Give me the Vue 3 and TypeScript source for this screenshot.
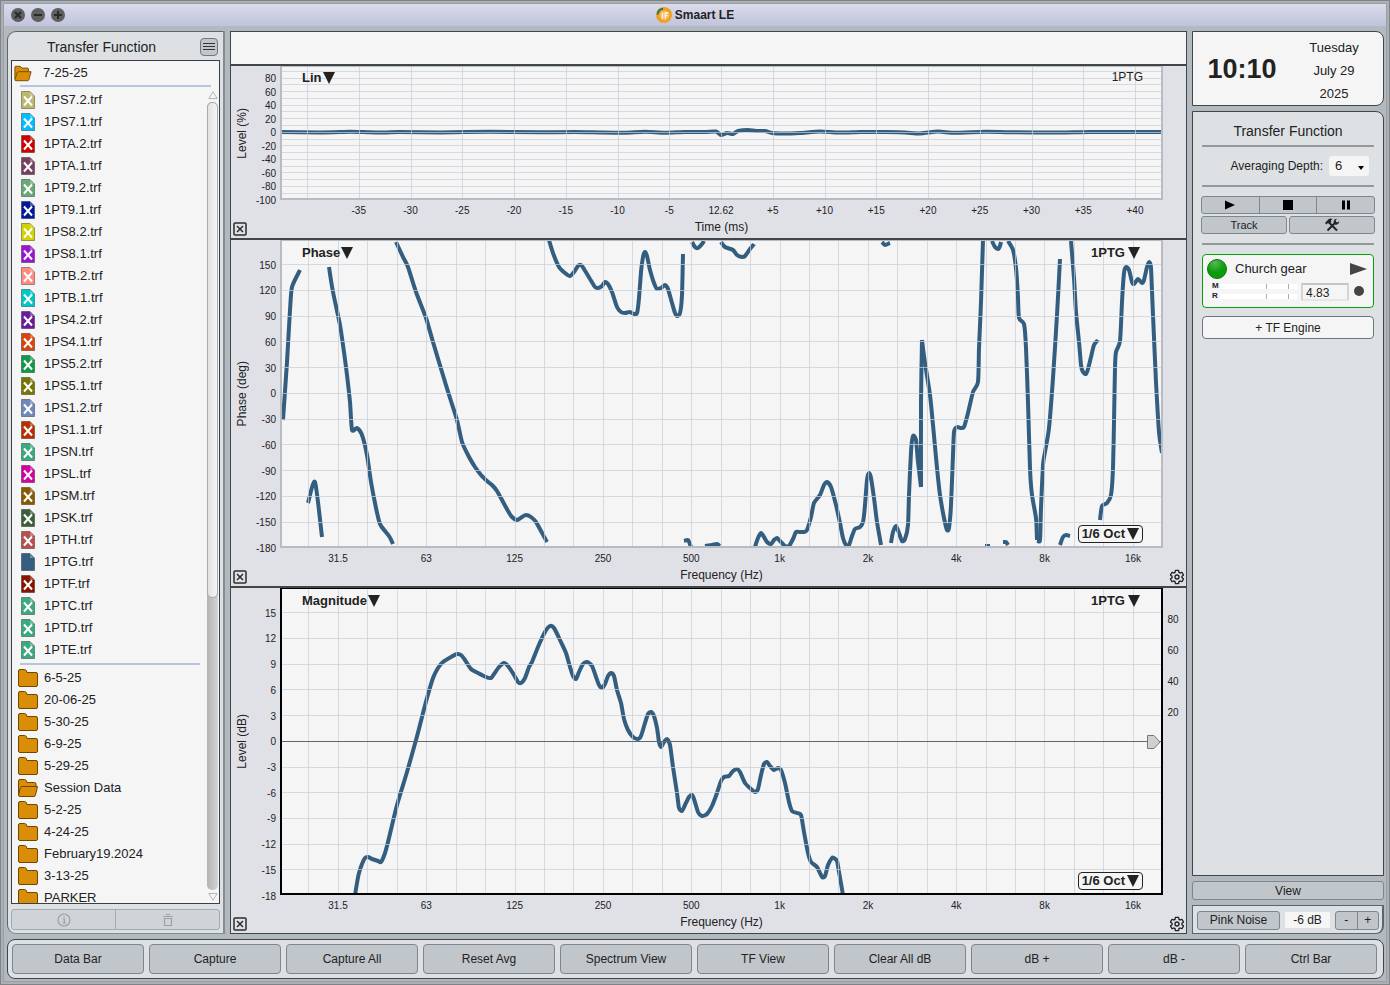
<script setup lang="ts">
import { ref } from 'vue'

interface FileItem { name: string; color: string; hidden: boolean }
interface FolderItem { name: string; open?: boolean }
interface Mark { at: number; text: string }
interface Chart {
  id: string
  title: string
  trace: string
  traceMenu: boolean
  smoothing: boolean
  top: number
  height: number
  xTitle: string
  yTitle: string
  xGrid: number[]
  yGrid: number[]
  xMarks: Mark[]
  yMarks: Mark[]
  rightMarks: Mark[]
  zero: number | null
  curves: number[][]
}

const PLOT_LEFT = 280
const PLOT_WIDTH = 883

const f = (name: string, color: string, hidden = true): FileItem => ({ name: name + '.trf', color, hidden })
const files: FileItem[] = [
  f('1PS7.2', '#bdb76b'), f('1PS7.1', '#00bfff'), f('1PTA.2', '#cc0000'), f('1PTA.1', '#784060'),
  f('1PT9.2', '#66aa77'), f('1PT9.1', '#001a99'), f('1PS8.2', '#d2d200'), f('1PS8.1', '#9a14d2'),
  f('1PTB.2', '#ff8a80'), f('1PTB.1', '#00c8c8'), f('1PS4.2', '#6a1a9a'), f('1PS4.1', '#d9440a'),
  f('1PS5.2', '#0f9a4a'), f('1PS5.1', '#777700'), f('1PS1.2', '#7088bb'), f('1PS1.1', '#b83000'),
  f('1PSN', '#3aaa80'), f('1PSL', '#d400a0'), f('1PSM', '#8a5a00'), f('1PSK', '#3a5f3a'),
  f('1PTH', '#b85050'), f('1PTG', '#335e80', false), f('1PTF', '#8a1200'), f('1PTC', '#3aaa80'),
  f('1PTD', '#3aaa80'), f('1PTE', '#3aaa80'),
]
const folders: FolderItem[] = [
  { name: '6-5-25' }, { name: '20-06-25' }, { name: '5-30-25' }, { name: '6-9-25' }, { name: '5-29-25' },
  { name: 'Session Data', open: true }, { name: '5-2-25' }, { name: '4-24-25' },
  { name: 'February19.2024' }, { name: '3-13-25' }, { name: 'PARKER' },
]
const commands = ['Data Bar', 'Capture', 'Capture All', 'Reset Avg', 'Spectrum View', 'TF View', 'Clear All dB', 'dB +', 'dB -', 'Ctrl Bar']

const range = (from: number, to: number, step = 1): number[] => {
  const out: number[] = []
  for (let v = from; v <= to; v += step) out.push(v)
  return out
}

const freqGrid = range(-16, 12).map(k => 780 + k * 29.44)
const freqMarks: Mark[] = ['31.5', '63', '125', '250', '500', '1k', '2k', '4k', '8k', '16k']
  .map((text, i) => ({ text, at: 338 + i * 88.33 }))

const levelY = (v: number): number => 132.3 - v * 0.677
const phaseY = (v: number): number => 393.4 - v * 0.8587
const magY = (v: number): number => 741.3 - v * 8.57

const impulse: number[] = [280, 132, 320, 132.4, 340, 132, 350, 131.7, 370, 132.3, 385, 132.6, 400, 132, 440, 132.4, 490, 131.8, 540, 132.3, 575, 132, 600, 132.5, 625, 132.8, 645, 131.8, 665, 132.8, 685, 132, 705, 132, 716, 131.5, 721, 135, 727, 133, 733, 134, 738, 131, 748, 130, 756, 131, 765, 131, 772, 133, 785, 133.5, 800, 133, 820, 131.5, 838, 132.6, 860, 132, 880, 132, 905, 132.5, 920, 133.4, 938, 131.6, 955, 132.8, 985, 131.8, 1010, 132.2, 1060, 132.6, 1090, 132, 1163, 132]

const phaseCurves: number[][] = [
  [283, 420, 287, 362, 290, 310, 292, 287, 300, 270],
  [308, 503, 315, 482, 322, 537],
  [329, 267, 333, 292, 340, 325, 344, 352, 347, 375, 350, 402, 352, 430, 357, 428, 362, 435, 367, 455, 371, 482, 376, 508, 380, 524, 385, 531, 389, 536, 393, 544],
  [396, 242, 403, 257, 408, 267, 416, 292, 426, 318, 433, 342, 442, 372, 450, 398, 457, 420, 462, 442, 468, 455, 475, 467, 481, 475, 487, 481, 492, 485, 497, 491, 502, 500, 508, 511, 512, 517, 517, 520, 522, 517, 526, 515, 531, 517, 536, 522, 541, 531, 547, 542],
  [549, 240, 553, 253, 559, 267, 565, 273, 570, 276, 574, 272, 578, 266, 581, 265, 584, 269, 590, 279, 595, 287, 598, 288, 602, 286, 605, 282, 608, 284, 612, 292, 617, 307, 621, 312, 625, 313, 630, 312, 634, 314, 637, 313, 639, 298, 641, 272, 643, 257, 645, 252, 647, 256, 650, 270, 654, 283, 657, 289, 661, 288, 665, 285, 668, 289, 672, 303, 675, 313, 677, 316, 680, 313, 682, 295, 683, 254],
  [692, 242, 695, 247, 698, 248, 702, 244, 704, 241],
  [721, 242, 725, 247, 733, 250, 737, 255, 742, 257, 745, 256, 750, 249, 754, 244],
  [684, 541, 688, 540, 691, 547],
  [705, 546, 712, 545, 717, 544, 720, 546],
  [755, 547, 758, 538, 761, 533, 764, 537, 767, 542, 771, 544, 774, 540, 777, 538, 781, 542, 785, 546, 789, 546, 793, 539, 796, 532, 800, 532, 804, 532, 807, 530, 811, 517, 814, 503, 820, 495, 824, 485, 827, 482, 831, 487, 836, 505, 840, 523, 843, 538, 846, 545, 849, 545, 852, 536, 855, 529, 860, 527, 863, 522, 865, 505, 867, 480, 869, 473, 871, 478, 874, 498, 877, 522, 881, 545],
  [882, 242, 885, 245, 890, 243],
  [891, 543, 893, 532, 896, 526, 899, 533, 902, 541, 905, 539, 908, 525, 909, 495, 911, 452, 913, 436, 916, 440, 918, 462, 921, 487],
  [921, 487, 921, 402, 922, 340],
  [922, 340, 925, 363, 930, 395, 933, 425, 937, 468, 940, 495, 944, 518, 947, 530, 949, 528, 951, 505, 953, 455, 954, 432, 957, 427, 961, 428, 964, 427, 968, 413, 973, 392, 978, 382, 979, 348, 981, 302, 983, 240],
  [992, 241, 995, 247, 998, 249, 1000, 246, 1001, 242],
  [1008, 241, 1013, 250, 1016, 268, 1018, 298, 1019, 318, 1024, 324, 1026, 348, 1028, 402, 1030, 468, 1032, 495, 1036, 518, 1037, 540],
  [1037, 540, 1040, 540, 1041, 508, 1043, 465, 1045, 452, 1049, 428, 1053, 378, 1057, 315, 1060, 259],
  [1071, 241, 1074, 278, 1076, 312, 1079, 342, 1081, 365, 1083, 372, 1086, 374, 1088, 369, 1091, 357, 1094, 345, 1098, 340],
  [1100, 520, 1102, 506, 1107, 503, 1111, 495, 1113, 468, 1114, 422, 1115, 368, 1116, 352, 1120, 341, 1122, 302, 1124, 273, 1126, 267, 1129, 270, 1132, 282, 1134, 284, 1138, 279, 1142, 283, 1144, 280, 1147, 267, 1149, 262, 1151, 268, 1153, 315, 1156, 382, 1159, 432, 1162, 453],
  [985, 546, 990, 546],
  [1003, 542, 1006, 542, 1008, 545],
  [1060, 545, 1063, 537, 1066, 535, 1070, 536],
]

const magnitude: number[] = [355, 895, 357, 883, 359, 873, 362, 864, 365, 858, 368, 857, 372, 859, 378, 861, 381, 862, 385, 853, 389, 838, 397, 805, 407, 772, 416, 740, 422, 717, 427, 698, 433, 678, 438, 668, 443, 662, 451, 657, 457, 654, 461, 655, 465, 660, 471, 669, 478, 673, 486, 677, 491, 678, 494, 674, 499, 667, 504, 663, 508, 666, 514, 675, 518, 682, 521, 683, 525, 678, 529, 667, 532, 662, 538, 647, 545, 632, 550, 626, 554, 628, 560, 640, 566, 653, 570, 667, 573, 676, 576, 679, 579, 672, 583, 664, 587, 662, 592, 666, 596, 677, 599, 685, 602, 688, 605, 684, 608, 676, 611, 673, 614, 676, 617, 690, 621, 703, 624, 719, 628, 730, 633, 737, 638, 739, 641, 736, 645, 723, 648, 714, 651, 712, 654, 716, 657, 728, 659, 742, 661, 747, 664, 742, 667, 739, 670, 745, 673, 767, 677, 793, 679, 808, 682, 811, 685, 805, 689, 797, 692, 795, 694, 799, 698, 812, 702, 816, 707, 814, 712, 806, 717, 793, 721, 781, 724, 777, 729, 776, 733, 771, 737, 769, 740, 772, 745, 783, 751, 789, 755, 792, 758, 789, 761, 775, 764, 764, 767, 762, 770, 766, 774, 770, 778, 768, 781, 770, 785, 783, 789, 802, 792, 811, 797, 813, 801, 815, 804, 832, 808, 853, 811, 862, 817, 867, 822, 877, 825, 876, 828, 865, 832, 858, 834, 858, 837, 861, 839, 872, 843, 895]

const charts: Chart[] = [
  {
    id: 'impulse', title: 'Lin', trace: '1PTG', traceMenu: false, smoothing: false, top: 66, height: 134,
    xTitle: 'Time (ms)', yTitle: 'Level (%)',
    xGrid: range(-8, 8).map(k => 721.5 + k * 51.75),
    yGrid: range(-90, 90, 10).map(levelY),
    xMarks: range(-7, 8).map(k => ({ at: 721 + k * 51.75, text: k === 0 ? '12.62' : (k > 0 ? '+' : '') + k * 5 })),
    yMarks: range(-100, 80, 20).map(v => ({ at: levelY(v), text: String(v) })),
    rightMarks: [], zero: null, curves: [impulse],
  },
  {
    id: 'phase', title: 'Phase', trace: '1PTG', traceMenu: true, smoothing: true, top: 240, height: 308,
    xTitle: 'Frequency (Hz)', yTitle: 'Phase (deg)',
    xGrid: freqGrid, yGrid: range(-150, 150, 30).map(phaseY), xMarks: freqMarks,
    yMarks: range(-180, 150, 30).map(v => ({ at: phaseY(v), text: String(v) })),
    rightMarks: [], zero: null, curves: phaseCurves,
  },
  {
    id: 'magnitude', title: 'Magnitude', trace: '1PTG', traceMenu: true, smoothing: true, top: 588, height: 307,
    xTitle: 'Frequency (Hz)', yTitle: 'Level (dB)',
    xGrid: freqGrid, yGrid: range(-15, 15, 3).filter(v => v !== 0).map(magY), xMarks: freqMarks,
    yMarks: range(-18, 15, 3).map(v => ({ at: magY(v), text: String(v) })),
    rightMarks: [80, 60, 40, 20].map((v, i) => ({ at: 619 + i * 31, text: String(v) })),
    zero: magY(0), curves: [magnitude],
  },
]

const px = (x: number): string => ((x - PLOT_LEFT) / PLOT_WIDTH) * 100 + '%'
const py = (c: Chart, y: number): string => ((y - c.top) / c.height) * 100 + '%'

/* Catmull-Rom spline through flat x,y pairs, written as cubic segments */
function spline(p: number[]): string {
  const n = p.length / 2
  const X = (i: number): number => p[2 * Math.min(Math.max(i, 0), n - 1)]
  const Y = (i: number): number => p[2 * Math.min(Math.max(i, 0), n - 1) + 1]
  let d = `M${X(0)} ${Y(0)}`
  for (let i = 0; i < n - 1; i++) {
    const c = [
      X(i) + (X(i + 1) - X(i - 1)) / 9, Y(i) + (Y(i + 1) - Y(i - 1)) / 9,
      X(i + 1) - (X(i + 2) - X(i)) / 9, Y(i + 1) - (Y(i + 2) - Y(i)) / 9,
    ].map(v => v.toFixed(1))
    d += ` C${c.join(' ')} ${X(i + 1)} ${Y(i + 1)}`
  }
  return d
}

const depth = ref('6')
const delay = ref('4.83')
</script>

<template>
  <div class="window">
    <div class="frame">
      <header class="titlebar">
        <div class="lights">
          <button type="button" aria-label="Close"><svg viewBox="0 0 14 14"><circle cx="7" cy="7" r="7" /><path d="M4 4l6 6M10 4l-6 6" /></svg></button>
          <button type="button" aria-label="Minimize"><svg viewBox="0 0 14 14"><circle cx="7" cy="7" r="7" /><path d="M3 7h8" /></svg></button>
          <button type="button" aria-label="Zoom"><svg viewBox="0 0 14 14"><circle cx="7" cy="7" r="7" /><path d="M3 7h8M7 3v8" /></svg></button>
        </div>
        <h1>
          <svg class="logo" viewBox="0 0 16 16" aria-hidden="true">
            <circle cx="8" cy="8" r="8" fill="#f0a020" />
            <circle cx="8.500" cy="8.500" r="5" fill="#f4b85c" />
            <path d="M1.600 7.500A6.400 6.400 0 0 1 7 1.700" fill="none" stroke="#25796b" stroke-width="2" />
            <path d="M6.500 5.500v6M9.300 11.500V6h3M9.300 8.600h2.400" fill="none" stroke="#fff8e8" stroke-width="1.400" />
          </svg>
          Smaart LE
        </h1>
      </header>

      <main class="workspace">
        <aside class="data">
          <div class="data-head">
            <h2>Transfer Function</h2>
            <button type="button" class="menu" aria-label="Menu"><svg viewBox="0 0 12 10"><path d="M0 1.500h12M0 4.500h12M0 7.500h12" /></svg></button>
          </div>
          <div class="tree">
            <div class="session">
              <svg class="folder-open" viewBox="0 0 20 18"><path d="M1 15V2q0-1 1-1h5l2 2h6q1 0 1 1v3" /><path d="M1 16L3.500 8q.4-1 1.500-1h14l-2.500 9q-.3 1-1.500 1H2q-1 0-1-1z" /></svg>
              <span>7-25-25</span>
            </div>
            <div class="rule"></div>
            <div class="tree-body">
              <div class="rows">
                <ul class="files">
                  <li v-for="item in files" :key="item.name">
                    <svg class="doc" viewBox="0 0 14 18">
                      <path d="M.5.5h8.500l4.500 4.500v12.500H.5z" :fill="item.color" stroke="#000" stroke-opacity=".35" />
                      <path d="M9 1v4h4z" fill="#fff" fill-opacity=".3" />
                      <path v-if="item.hidden" d="M3 5.500l8 9M11 5.500l-8 9" fill="none" stroke="#fff" stroke-width="2" />
                    </svg>
                    <span>{{ item.name }}</span>
                  </li>
                </ul>
                <ul class="folders">
                  <li v-for="item in folders" :key="item.name">
                    <svg v-if="item.open" class="folder-open" viewBox="0 0 20 18"><path d="M.5 16V2q0-1.500 1.500-1.500h4.500q1.500 0 2 1.500l.5 1.500h7.500q1.500 0 1.500 1.500v3" /><path d="M.5 16L2.500 8.500q.4-1 1.500-1h15.500l-2 8.500q-.3 1.500-1.500 1.500H2q-1.500 0-1.500-1.500z" /></svg>
                    <svg v-else class="folder-closed" viewBox="0 0 20 18"><path d="M.5 2q0-1.500 1.500-1.500h4.500q1.500 0 2 1.500l.5 1.500h9q1.500 0 1.500 1.500v11q0 1.500-1.500 1.500H2q-1.500 0-1.500-1.500z" /></svg>
                    <span>{{ item.name }}</span>
                  </li>
                </ul>
              </div>
              <div class="scroll" aria-hidden="true">
                <svg viewBox="0 0 10 8"><path d="M5 .8L9.200 7.500H.8z" /></svg>
                <div class="track"><div class="thumb"></div></div>
                <svg viewBox="0 0 10 8"><path d="M5 7.200L9.200.5H.8z" /></svg>
              </div>
            </div>
          </div>
          <div class="data-actions">
            <button type="button" disabled aria-label="Info"><svg viewBox="0 0 14 14"><circle cx="7" cy="7" r="6" /><path d="M6 6h1.300v4M5.500 10h3.500M6.500 3.800h1.200" /></svg></button>
            <button type="button" disabled aria-label="Delete"><svg viewBox="0 0 14 14"><path d="M2.500 3.500h9M5 1.500h4M3.500 5.500v7h7v-7z" /></svg></button>
          </div>
        </aside>

        <section class="plots">
          <div class="legend"></div>
          <article v-for="c in charts" :key="c.id" class="chart" :class="c.id">
            <div class="y-axis">
              <span class="y-title">{{ c.yTitle }}</span>
              <svg class="y-marks">
                <text v-for="m in c.yMarks" :key="m.text" x="100%" :y="py(c, m.at)" dy="4">{{ m.text }}</text>
              </svg>
            </div>
            <div class="plot">
              <svg class="canvas" width="100%" height="100%">
                <svg width="100%" height="100%" :viewBox="`${PLOT_LEFT} ${c.top} ${PLOT_WIDTH} ${c.height}`" preserveAspectRatio="none">
                  <path v-for="(curve, i) in c.curves" :key="i" class="curve" :d="spline(curve)" />
                </svg>
                <g class="grid">
                  <line v-for="x in c.xGrid" :key="'x' + x" :x1="px(x)" :x2="px(x)" y1="0" y2="100%" />
                  <line v-for="y in c.yGrid" :key="'y' + y" x1="0" x2="100%" :y1="py(c, y)" :y2="py(c, y)" />
                </g>
                <line v-if="c.zero !== null" class="zero" x1="0" x2="100%" :y1="py(c, c.zero)" :y2="py(c, c.zero)" />
              </svg>
              <button type="button" class="pick plot-title">{{ c.title }}<svg viewBox="0 0 12 12"><path d="M0 0h12L6 12z" /></svg></button>
              <button v-if="c.traceMenu" type="button" class="pick trace">{{ c.trace }}<svg viewBox="0 0 12 12"><path d="M0 0h12L6 12z" /></svg></button>
              <span v-else class="trace-name">{{ c.trace }}</span>
              <button v-if="c.smoothing" type="button" class="pick smoothing">1/6 Oct<svg viewBox="0 0 12 12"><path d="M0 0h12L6 12z" /></svg></button>
              <svg v-if="c.zero !== null" class="marker" viewBox="0 0 14 14"><path d="M.5.5h6.500l6 6.500-6 6.500H.5z" /></svg>
            </div>
            <svg class="right-marks">
              <text v-for="m in c.rightMarks" :key="m.text" x="10" :y="py(c, m.at)" dy="4">{{ m.text }}</text>
            </svg>
            <div class="corner left">
              <button type="button" aria-label="Close plot"><svg class="close" viewBox="0 0 14 14"><rect x="1" y="1" width="12" height="12" rx="1" /><path d="M4 4l6 6M10 4l-6 6" /></svg></button>
            </div>
            <div class="x-axis">
              <svg class="x-marks"><text v-for="m in c.xMarks" :key="m.text" :x="px(m.at)" y="14">{{ m.text }}</text></svg>
              <span>{{ c.xTitle }}</span>
            </div>
            <div class="corner right">
              <button v-if="c.smoothing" type="button" aria-label="Plot settings">
                <svg class="gear" viewBox="0 0 24 24"><path d="M19.430 12.980c.04-.32.07-.64.07-.98 0-.34-.03-.66-.07-.98l2.110-1.650c.19-.15.24-.42.12-.64l-2-3.460c-.09-.16-.26-.25-.44-.25-.06 0-.12.01-.17.03l-2.490 1c-.52-.4-1.080-.73-1.690-.98l-.38-2.650C14.460 2.180 14.250 2 14 2h-4c-.25 0-.46.18-.49.42l-.38 2.650c-.61.25-1.170.59-1.690.98l-2.490-1c-.06-.02-.12-.03-.18-.03-.17 0-.34.09-.43.25l-2 3.460c-.13.22-.07.49.12.64l2.110 1.650c-.04.32-.07.65-.07.98 0 .33.03.66.07.98l-2.110 1.650c-.19.15-.24.42-.12.64l2 3.460c.09.16.26.25.44.25.06 0 .12-.01.17-.03l2.490-1c.52.4 1.080.73 1.690.98l.38 2.650c.03.24.24.42.49.42h4c.25 0 .46-.18.49-.42l.38-2.650c.61-.25 1.170-.59 1.690-.98l2.490 1c.06.02.12.03.18.03.17 0 .34-.09.43-.25l2-3.460c.12-.22.07-.49-.12-.64z" /><circle cx="12" cy="12" r="3" /></svg>
              </button>
            </div>
          </article>
        </section>

        <aside class="control">
          <div class="clock">
            <time class="time">10:10</time>
            <div class="date"><span>Tuesday</span><span>July 29</span><span>2025</span></div>
          </div>
          <div class="engine">
            <h2>Transfer Function</h2>
            <hr />
            <div class="averaging">
              <label for="depth">Averaging Depth:</label>
              <div class="select">
                <select id="depth" v-model="depth"><option>6</option><option>8</option><option>10</option></select>
                <svg viewBox="0 0 6 4"><path d="M0 0h6L3 4z" /></svg>
              </div>
            </div>
            <hr />
            <div class="transport">
              <button type="button" aria-label="Play"><svg viewBox="0 0 12 12"><path d="M1 1.500l10 4.500-10 4.500z" /></svg></button>
              <button type="button" aria-label="Stop"><svg viewBox="0 0 12 12"><path d="M1 1h10v10H1z" /></svg></button>
              <button type="button" aria-label="Pause"><svg viewBox="0 0 12 12"><path d="M2 1.500h3v9H2zM7 1.500h3v9H7z" /></svg></button>
            </div>
            <div class="tools">
              <button type="button">Track</button>
              <button type="button" aria-label="Tools">
                <svg class="tool-icon" viewBox="0 0 16 14">
                  <path d="M4.500 4L13 12.500M11 5L3.500 12.500" fill="none" stroke="#222" stroke-width="1.900" />
                  <path d="M1 5L4.500 1.200q2-1.200 4.200-.2L6.900 2.300l.5 1.400-2 2-1.300-.9L2.500 6.500z" />
                  <path d="M9.700 5.500q-.5-2.800 1-4 1.200-.9 2.200-.6L11.600 2.500l.5 1.500 1.500.4 1.500-1.400q.4 1.600-.9 2.800-1.400 1.200-3 .8z" />
                </svg>
              </button>
            </div>
            <hr />
            <div class="card">
              <svg class="led" viewBox="0 0 20 20"><defs><radialGradient id="led" cx=".4" cy=".2" r=".5"><stop offset="0" stop-color="#58b858" /><stop offset="1" stop-color="#0b9b0b" /></radialGradient></defs><circle cx="10" cy="10" r="9.500" fill="url(#led)" stroke="#0a7a0a" /></svg>
              <span class="name">Church gear</span>
              <button type="button" aria-label="Start"><svg class="start" viewBox="0 0 17 12"><path d="M0 0l17 6-17 6z" /></svg></button>
              <div class="meters">
                <span>M</span><i></i>
                <span>R</span><i></i>
              </div>
              <input v-model="delay" type="text" aria-label="Delay (ms)" />
              <button type="button" aria-label="Find delay"><svg class="dot" viewBox="0 0 10 10"><circle cx="5" cy="5" r="5" /></svg></button>
            </div>
            <button type="button" class="add">+ TF Engine</button>
          </div>
          <button type="button" class="view">View</button>
          <div class="generator">
            <button type="button" class="noise">Pink Noise</button>
            <output>-6 dB</output>
            <div class="stepper"><button type="button">-</button><button type="button">+</button></div>
          </div>
        </aside>
      </main>

      <nav class="commands">
        <button v-for="c in commands" :key="c" type="button">{{ c }}</button>
      </nav>
    </div>
  </div>
</template>

<style>
html, body { margin: 0; height: 100%; }
#app { height: 100%; }
</style>

<style scoped>
* { box-sizing: border-box; }
.window {
  height: 100%;
  min-height: 600px;
  padding: 2px;
  border: 1px solid #808487;
  background: #a9b1b6;
  color: #222;
  font: 12px/16px "Liberation Sans", Arial, sans-serif;
}
.frame {
  height: 100%;
  display: flex;
  flex-direction: column;
  border: 1px solid #999fa4;
  background: #b2bac0;
}
button { font: inherit; color: inherit; margin: 0; padding: 0; border: 0; background: none; display: flex; align-items: center; justify-content: center; }
button svg { display: block; }
h1, h2 { margin: 0; font-weight: 400; }
h2 { font-size: 14px; line-height: 20px; text-align: center; }
ul { list-style: none; margin: 0; padding: 0; }

.titlebar { flex: none; height: 22px; display: grid; grid-template-columns: 1fr auto 1fr; align-items: center; background: linear-gradient(#dadceb, #c0c3db); }
.lights { display: flex; gap: 6px; padding-left: 7px; }
.lights svg { width: 14px; height: 14px; }
.lights circle { fill: #5e5f60; }
.lights path { stroke: #2a2a2a; stroke-width: 2; fill: none; }
h1 { display: flex; align-items: center; gap: 3px; font-size: 12px; font-weight: 700; }
.logo { width: 16px; height: 16px; }

.workspace { flex: 1; min-height: 0; display: grid; grid-template-columns: 218px minmax(0, 1fr) 192px; column-gap: 5px; padding: 5px 2px 5px 3px; }

.data { display: flex; flex-direction: column; min-height: 0; padding: 0 3px 3px 3px; background: #dde1e4; border: 1px solid #5d666c; border-right: 2px solid #828c92; border-bottom-color: #828c92; border-radius: 9px 0 0 9px; }
.data-head { height: 28px; flex: none; display: grid; grid-template-columns: 1fr 18px; align-items: center; padding: 2px 2px 0 0; }
.data-head h2 { padding-right: 8px; }
.menu { width: 18px; height: 18px; border: 1px solid #6f797f; border-radius: 4px; background: #c0c6ca; }
.menu svg { width: 12px; height: 10px; }
.menu path { stroke: #333; stroke-width: 1; }
.tree { flex: 1; min-height: 0; display: flex; flex-direction: column; border: 1px solid #3a4045; background: #f5f5f5; font-size: 13px; line-height: 22px; }
.session { flex: none; display: flex; align-items: center; gap: 11px; height: 24px; padding: 0 8px 0 2px; }
.session svg { width: 18px; height: 17px; }
.rule { flex: none; height: 2px; margin: 0 8px; background: #b6c5dc; }
.tree-body { flex: 1; min-height: 0; display: grid; grid-template-columns: minmax(0, 1fr) 12px; }
.rows { overflow: hidden; }
.files { margin: 0 7px 0 8px; border-bottom: 2px solid #b6c5dc; padding: 2px 0 2px 1px; }
.files li, .folders li { display: flex; align-items: center; height: 22px; white-space: nowrap; }
.files li { gap: 9px; }
.doc { width: 14px; height: 18px; }
.folders { padding: 2px 0 0 6px; }
.folders li { gap: 6px; }
.folders svg { width: 20px; height: 18px; }
.folder-open path, .folder-closed path { fill: #da8d06; stroke: #6d4703; }
.scroll { display: flex; flex-direction: column; align-items: center; gap: 3px; padding: 4px 1px 2px 0; }
.scroll svg { width: 10px; height: 8px; flex: none; }
.scroll path { fill: none; stroke: #b4b4b4; }
.track { flex: 1; width: 11px; border-radius: 5px; background: linear-gradient(90deg, #b4b4b4, #d4d4d4); }
.thumb { height: 63%; border: 1px solid #aaa; border-radius: 5px; background: linear-gradient(90deg, #e2e2e2, #f5f5f5); }
.data-actions { flex: none; display: flex; height: 21px; margin-top: 5px; border: 1px solid #a3aaae; border-radius: 3px; background: #ced4d7; }
.data-actions button { flex: 1; }
.data-actions button + button { border-left: 1px solid #a3aaae; }
.data-actions svg { width: 14px; height: 14px; }
.data-actions path, .data-actions circle { fill: none; stroke: #9ba1a4; stroke-width: 1.2; }

.plots { display: flex; flex-direction: column; min-height: 0; border: 1px solid #3f474b; background: #e0e1e7; }
.legend { flex: none; height: 32px; background: #f5f5f5; }
.chart { display: grid; grid-template-columns: 49px minmax(0, 1fr) 23px; grid-template-rows: minmax(0, 1fr) 38px; min-height: 0; border-top: 2px solid #3f474b; box-sizing: content-box; }
.impulse { flex: 172 1 0; }
.phase { flex: 346 1 0; }
.magnitude { flex: 345 1 0; }
.y-axis { display: flex; align-items: center; padding: 0 4px 0 3px; }
.y-title { width: 16px; writing-mode: vertical-rl; transform: rotate(180deg); text-align: center; white-space: nowrap; }
.y-marks { flex: 1; width: 26px; height: 100%; overflow: visible; }
.y-marks text { font-size: 10px; text-anchor: end; fill: #222; }
.plot { position: relative; background: #f5f5f5; }
.plot::after { content: ""; position: absolute; inset: 0; border: 2px solid #b8bbc2; border-top-width: 1px; pointer-events: none; }
.magnitude .plot::after { border-color: #000; }
.canvas { display: block; position: absolute; inset: 0; }
.curve { fill: none; stroke: #335e80; stroke-width: 4; stroke-linejoin: round; vector-effect: non-scaling-stroke; }
.grid line { stroke: #c9cdd6; stroke-opacity: .7; shape-rendering: crispEdges; }
.zero { stroke: #666; shape-rendering: crispEdges; }
.pick { position: absolute; z-index: 1; font-weight: 700; font-size: 13px; line-height: 16px; }
.pick svg { width: 12px; height: 12px; fill: #222; }
.plot-title { left: 22px; top: 4px; gap: 1px; }
.trace { right: 23px; top: 5px; gap: 3px; }
.trace-name { position: absolute; right: 20px; top: 3px; }
.phase .plot-title, .magnitude .plot-title { top: 5px; }
.smoothing { right: 20px; bottom: 5px; gap: 2px; height: 18px; padding: 0 3px; border: 1px solid #222; border-radius: 4px; background: #f5f5f5; }
.marker { position: absolute; z-index: 1; right: 2px; top: 50%; width: 14px; height: 14px; margin-top: -7px; fill: #d0d0d0; stroke: #777; }
.right-marks { width: 23px; height: 100%; overflow: visible; }
.right-marks text, .x-marks text { font-size: 10px; text-anchor: middle; fill: #222; }
.x-axis { display: flex; flex-direction: column; align-items: center; }
.x-marks { width: 100%; height: 19px; overflow: visible; }
.corner { display: flex; align-items: flex-end; padding: 0 2px 2px; }
.corner.right { justify-content: flex-end; padding: 0 1px 1px; }
.close { width: 14px; height: 14px; fill: none; stroke: #2c2c2c; stroke-width: 1.5; }
.gear { width: 16px; height: 16px; fill: none; stroke: #222; stroke-width: 2; }

.control { display: flex; flex-direction: column; gap: 5px; min-height: 0; }
.clock { flex: none; height: 75px; display: grid; grid-template-columns: 98px 1fr; align-items: center; justify-items: center; border: 1px solid #3f474b; border-radius: 0 8px 8px 0; background: #f5f5f5; }
.time { font-size: 27px; line-height: 32px; font-weight: 700; }
.date { display: flex; flex-direction: column; align-items: center; font-size: 13px; line-height: 23px; margin-top: 3px; margin-right: 6px; }
.engine { flex: 1; min-height: 0; padding: 9px 9px 0 9px; border: 1px solid #3f474b; border-radius: 0 8px 0 0; background: #dde1e4; }
hr { height: 2px; margin: 0; border: 0; background: #94989b; }
.engine h2 { margin-bottom: 4px; }
.averaging { display: flex; align-items: center; justify-content: flex-end; gap: 6px; height: 38px; padding-right: 5px; }
.select { display: flex; align-items: center; width: 40px; height: 20px; padding-right: 5px; border-radius: 3px; background: #f5f5f5; }
.select select { flex: 1; min-width: 0; appearance: none; border: 0; padding: 0 0 0 6px; background: transparent; font: inherit; font-size: 13px; color: inherit; }
.select svg { width: 6px; height: 4px; margin-top: 4px; }
.transport { display: flex; height: 18px; margin: 9px -1px 2px; border: 1px solid #7d878d; border-radius: 3px; background: #c0c6ca; }
.transport button { flex: 1; }
.transport button + button { border-left: 1px solid #7d878d; }
.transport svg { width: 12px; height: 12px; }
.tools { display: flex; gap: 2px; margin: 0 -1px 9px; font-size: 11px; }
.tools button { flex: 1; height: 18px; border: 1px solid #7d878d; border-radius: 3px; background: #c0c6ca; }
.tool-icon { width: 16px; height: 14px; fill: #222; }
.card { display: grid; grid-template-columns: 20px 69px 52px 1fr; grid-template-rows: 20px 1fr; align-items: center; height: 54px; margin-top: 9px; padding: 4px 5px; border: 1px solid #0aa00a; border-radius: 4px; background: #f5f5f5; }
.led { width: 20px; height: 20px; margin-left: -1px; }
.name { grid-column: 2 / 4; padding-left: 7px; font-size: 13px; white-space: nowrap; }
.card button { justify-self: center; }
.start { width: 17px; height: 12px; fill: #444; }
.meters { grid-column: 1 / 3; display: grid; grid-template-columns: 8px 1fr; grid-auto-rows: 10px; align-items: center; padding-left: 4px; font-size: 8px; line-height: 10px; font-weight: 700; }
.meters i { display: block; height: 5px; background: linear-gradient(#aaa, #aaa) 60% 0 / 1px 100% no-repeat, linear-gradient(#aaa, #aaa) 90% 0 / 1px 100% no-repeat, #fff; }
.card input { width: 48px; height: 18px; margin: 2px 0 0 4px; padding: 2px 3px 0; border: 2px solid #d5d5d5; border-top-color: #c4c4c4; border-bottom-color: #e6e6e6; background: #f5f5f5; color: inherit; font: 12px/14px "Liberation Sans", Arial, sans-serif; }
.dot { width: 10px; height: 10px; fill: #444; }
.add { width: 100%; height: 23px; margin-top: 8px; border: 1px solid #6c767c; border-radius: 4px; background: #f5f5f5; }
.view { flex: none; height: 19px; border: 1px solid #7d878d; border-radius: 3px; background: #c0c6ca; }
.generator { flex: none; height: 29px; display: flex; align-items: center; gap: 5px; padding: 1px 3px 0 4px; border: 1px solid #5d666c; border-right-width: 2px; border-radius: 0 0 8px 0; background: #dde1e4; }
.noise { width: 83px; height: 19px; border: 1px solid #7d878d; border-radius: 3px; background: #c0c6ca; }
.generator output { flex: 1; height: 16px; text-align: center; background: #f5f5f5; }
.stepper { display: flex; width: 44px; height: 19px; border: 1px solid #7d878d; border-radius: 3px; background: #c0c6ca; }
.stepper button { flex: 1; }
.stepper button + button { border-left: 1px solid #7d878d; }

.commands { flex: none; display: flex; gap: 5px; height: 40px; margin: 0 2px 2px 3px; padding: 4px 6px 4px 4px; border: 1px solid #3f474b; border-radius: 8px; background: #dde1e4; }
.commands button { flex: 1; border: 1px solid #7d878d; border-radius: 4px; background: #c0c6ca; white-space: nowrap; }
</style>
